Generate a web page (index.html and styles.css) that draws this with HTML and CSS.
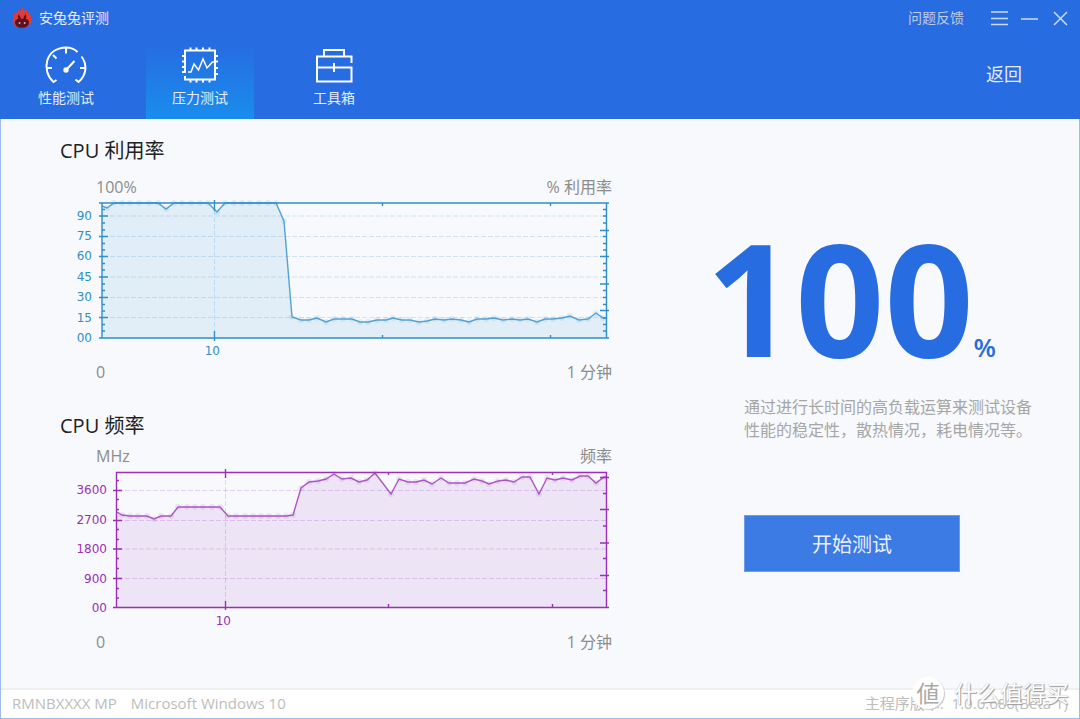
FILE: index.html
```html
<!DOCTYPE html>
<html lang="zh-CN">
<head>
<meta charset="utf-8">
<title>安兔兔评测</title>
<link rel="stylesheet" href="styles.css">
</head>
<body>
<div class="window">
  <header class="header">
    <div class="titlebar">
      <svg class="logo" viewBox="0 0 20 22" aria-hidden="true">
        <path d="M10 21C4 21 .8 17.500 .8 12.500C.8 9 2 6.500 4 5L5 6.500L6.500 2.500L8 4.500L10.500 .5L12.500 4L14.500 2L15.500 6L17 5.500C18.800 8 19.400 10 19.400 12.500C19.400 17.500 16 21 10 21Z" fill="#e23a35"/>
        <path d="M10 20.800C5.500 20.800 3 18.500 3 15.500C3 13.300 4.500 12.200 6.300 12C5.700 10 5.800 8 6.600 7.500C7.800 8 8.500 10 8.800 11.800H11.400C11.700 10 12.400 8 13.600 7.500C14.400 8 14.500 10 13.900 12C15.700 12.300 17 13.300 17 15.500C17 18.500 14.500 20.800 10 20.800Z" fill="#5c1220"/>
        <circle cx="7.500" cy="16" r="1" fill="#f0a0a0"/><circle cx="12.700" cy="16" r="1" fill="#f0a0a0"/>
      </svg>
      <h1 class="app-name">安兔兔评测</h1>
      <a class="feedback" href="#feedback">问题反馈</a>
      <div class="controls">
        <button class="control" aria-label="菜单"><svg viewBox="0 0 18 16"><path d="M0 2H17M0 8.500H17M0 14.500H17"/></svg></button>
        <button class="control" aria-label="最小化"><svg viewBox="0 0 18 16"><path d="M0 9H17"/></svg></button>
        <button class="control" aria-label="关闭"><svg viewBox="0 0 18 16"><path d="M3 2L16 15M16 2L3 15"/></svg></button>
      </div>
    </div>
    <div class="toolbar">
      <nav class="tabs">
        <a class="tab" href="#performance">
          <svg class="tab-icon" viewBox="0 0 44 40"><path stroke-width="2" d="M12.500 35L9.500 37C-3 26 1 3 22 2.500C27 2.500 31 4.500 33.500 7M37.500 11.500C44 20 42 31 34.500 37L31.500 34.500M22 3V8.500M9 10L12.500 13.500M2.500 23H8M36 23H41.500M22 25L30.500 16"/><circle cx="22" cy="25" r="2.700" fill="#fff" stroke="none"/></svg>
          <span>性能测试</span>
        </a>
        <a class="tab tab-active" href="#stress" aria-current="page">
          <svg class="tab-icon" viewBox="0 0 44 40"><path stroke-width="2" d="M7 27V5.500H37V34.500H7V31M12.500 5.500V2.500M18.500 5.500V2.500M25 5.500V2.500M31.500 5.500V2.500M12.500 37.500V34.500M18.500 37.500V34.500M25 37.500V34.500M31.500 37.500V34.500M4 11H7M4 16.500H7M4 22H7M4 27H8M37 11H40M37 16.500H40M37 23H40M37 29H40"/><path stroke-width="1.500" d="M10 27H13L16 19L20.500 25L25 14L29 23L34.500 17H37"/></svg>
          <span>压力测试</span>
        </a>
        <a class="tab" href="#toolbox">
          <svg class="tab-icon" viewBox="0 0 44 40"><path stroke-width="2" d="M12 11V5H32V11M39.500 18V11.500H5V36.500H39.500V22.500H5M22 18V27"/></svg>
          <span>工具箱</span>
        </a>
      </nav>
      <button class="back">返回</button>
    </div>
  </header>

  <main class="main">
    <div class="charts">
      <section class="usage">
        <h2 class="heading">CPU 利用率</h2>
        <div class="labels"><span>100%</span><span>% 利用率</span></div>
        <svg class="chart chart-usage" viewBox="60 199 552 161" role="img" aria-label="CPU 利用率">
          <defs><marker id="dot-usage" markerWidth="8" markerHeight="8" refX="4" refY="4" markerUnits="userSpaceOnUse"><circle class="halo" cx="4" cy="4" r="3"/></marker></defs>
          <path class="area" d="M102 338V206L107 208L114 203H158L166 209L174 203H208L217 212L225 203H276L284 221L292 317L301 320H309L317 318L326 322L334 319H352L360 322H368L377 320H386L393 318L402 320H410L419 322L435 319L444 320L452 319L469 322L477 319H486L494 318L503 320L512 319L520 320L528 319L537 322L545 319H553L570 316L579 320L588 319L596 313L603 318H606V338Z"/>
          <path class="grid" d="M103 216H606M103 236.500H606M103 256.500H606M103 277H606M103 297.500H606M103 317.500H606M214.500 203V338"/>
          <path class="line" marker-mid="url(#dot-usage)" d="M102 206L107 208L114 203H122H130H139H149H158L166 209L174 203H182H191H200H208L217 212L225 203H234H242H250H259H268H276L284 221L292 317L301 320H309L317 318L326 322L334 319H343H352L360 322H368L377 320H386L393 318L402 320H410L419 322L427 321L435 319L444 320L452 319L461 320L469 322L477 319H486L494 318L503 320L512 319L520 320L528 319L537 322L545 319H553L562 318L570 316L579 320L588 319L596 313L603 318H606"/>
          <path class="axis" d="M99 203H609M99 338H609M102 203V338M606.500 203V338M99 216H108M99 236.500H108M99 256.500H108M99 277H108M99 297.500H108M99 317.500H108M214.500 200V211M214.500 331V341M382.500 203V206M550.500 203V206M382.500 335V338M550.500 335V338M600 230.500H609M600 256.500H609M600 284H609M600 310.500H609"/>
          <path class="axis" d="M102 209.500H105M102 223H105M102 230H105M102 243.500H105M102 250H105M102 263.500H105M102 270H105M102 284H105M102 290.500H105M102 304.500H105M102 311H105M102 324.500H105M102 331H105M603 209.500H606M603 216H606M603 223H606M603 236.500H606M603 243.500H606M603 250H606M603 263.500H606M603 270.500H606M603 277H606M603 290.500H606M603 297.500H606M603 304.500H606M603 318H606M603 324.500H606M603 331H606"/>
          <g class="ticks"><text x="92" y="220">90</text><text x="92" y="240">75</text><text x="92" y="260">60</text><text x="92" y="281">45</text><text x="92" y="301">30</text><text x="92" y="322">15</text><text x="92" y="342">00</text><text x="220" y="355">10</text></g>
        </svg>
        <div class="labels"><span>0</span><span>1 分钟</span></div>
      </section>
      <section class="frequency">
        <h2 class="heading">CPU 频率</h2>
        <div class="labels"><span>MHz</span><span>频率</span></div>
        <svg class="chart chart-frequency" viewBox="60 468 552 162" role="img" aria-label="CPU 频率">
          <defs><marker id="dot-frequency" markerWidth="8" markerHeight="8" refX="4" refY="4" markerUnits="userSpaceOnUse"><circle class="halo" cx="4" cy="4" r="3"/></marker></defs>
          <path class="area" d="M116 607V512L122 515L130 516H147L154 519L161 516H171L178 507H220L228 516H286L293 515L301 488L309 482L318 481L326 479L334 474L342 479L351 478L359 482L367 480L375 473L391 494L399 479L408 482H416L424 480L432 484L441 478L449 483H465L474 479L489 484L498 481L506 480L514 482L522 477H530L539 494L547 478L555 480L563 478L572 480L580 476H588L596 483L604 477H606V607Z"/>
          <path class="grid" d="M118 490.500H606M118 520.500H606M118 549H606M118 578.500H606M225.500 473V607"/>
          <path class="line" marker-mid="url(#dot-frequency)" d="M117 512L122 515L130 516H138H147L154 519L161 516H171L178 507H187H195H203H212H220L228 516H236H245H253H261H269H278H286L293 515L301 488L309 482L318 481L326 479L334 474L342 479L351 478L359 482L367 480L375 473L391 494L399 479L408 482H416L424 480L432 484L441 478L449 483H457H465L474 479L482 481L489 484L498 481L506 480L514 482L522 477H530L539 494L547 478L555 480L563 478L572 480L580 476H588L596 483L604 477H606"/>
          <path class="axis" d="M116 472.500H607M113 607.500H609M116.500 472V607M606.500 472V607M113 490.500H122M113 520.500H122M113 549H122M113 578.500H122M225.500 469V478M225.500 601V610M388.500 472V475M552.500 472V475M388.500 604V607M552.500 604V607M600 477.500H609M600 509.500H609M600 543H609M600 575.500H609"/>
          <path class="axis" d="M116 480.500H119M116 499.500H119M116 509.500H119M116 529.500H119M116 539.500H119M116 558.500H119M116 568.500H119M116 588.500H119M116 598H119M603 493.500H606M603 526H606M603 558.500H606M603 590.500H606"/>
          <g class="ticks"><text x="107" y="494">3600</text><text x="107" y="524">2700</text><text x="107" y="553">1800</text><text x="107" y="583">900</text><text x="107" y="612">00</text><text x="231" y="625">10</text></g>
        </svg>
        <div class="labels"><span>0</span><span>1 分钟</span></div>
      </section>
    </div>
    <section class="result">
      <p class="score">100<span class="percent">%</span></p>
      <div class="details">
        <p class="description">通过进行长时间的高负载运算来测试设备性能的稳定性，散热情况，耗电情况等。</p>
        <button class="start">开始测试</button>
      </div>
    </section>
  </main>

  <footer class="footer">
    <div class="system"><span>RMNBXXXX MP</span><span>Microsoft Windows 10</span></div>
    <span>主程序版本:&nbsp; 1.0.0.680(Beta 1)</span>
    <div class="watermark"><span class="badge">値</span><span>什么值得买</span></div>
  </footer>
</div>
</body>
</html>
```
FILE: styles.css
```css
* { box-sizing: border-box; }
body, h1, h2, p { margin: 0; }
body {
  font-family: "Open Sans", "Noto Sans CJK SC", sans-serif;
  font-size: 16px;
  color: #8c8c8c;
  background: #f7f9fd;
}
button {
  padding: 0;
  border: 0;
  background: none;
  color: inherit;
  font-family: inherit;
}
a { color: inherit; text-decoration: none; }
.window {
  display: flex;
  flex-direction: column;
  min-height: 100vh;
  border: 1px solid #9fbbed;
  border-top: 0;
}

.header {
  margin: 0 -1px;
  background: #276ce1;
  color: #e5edfc;
}
.titlebar {
  display: flex;
  align-items: center;
  height: 35px;
  padding: 0 11px 0 12px;
}
.logo { width: 20px; height: 22px; margin-right: 7px; }
.app-name { flex: 1; font-size: 14px; font-weight: 400; line-height: 20px; }
.feedback { margin-right: 27px; font-size: 14px; line-height: 20px; color: #bfcbe3; }
.controls { display: flex; gap: 12px; }
.control { width: 18px; height: 16px; }
.control svg { display: block; fill: none; stroke: #cbdcf8; stroke-width: 1.5; }
.toolbar {
  display: flex;
  justify-content: space-between;
  align-items: stretch;
  height: 84px;
  padding: 0 58px 0 12px;
}
.tabs { display: flex; gap: 26px; }
.tab {
  display: flex;
  flex-direction: column;
  align-items: center;
  width: 108px;
  padding-top: 10px;
  font-size: 14px;
  line-height: 26px;
}
.tab-active { background: linear-gradient(#276ce1 10%, #198ded); }
.tab-icon { width: 44px; height: 40px; fill: none; stroke: #fff; }
.back { align-self: center; font-size: 18px; line-height: 26px; padding-bottom: 6px; }

.main {
  flex: 1;
  display: grid;
  grid-template-columns: 552fr 467fr;
  padding: 18px 0 34px 59px;
}
.heading { font-size: 20px; font-weight: 400; line-height: 28px; color: #222; }
.labels {
  display: flex;
  justify-content: space-between;
  padding-left: 36px;
  line-height: 24px;
}
.usage .heading { margin-bottom: 10px; }
.usage { margin-bottom: 28px; }
.frequency .heading { margin-bottom: 4px; }
.chart { display: block; width: 100%; }
.chart-usage { color: #2f8fc8; }
.chart-frequency { color: #9b2fb8; }
.axis { fill: none; stroke: currentColor; stroke-width: 1.4; }
.line { fill: none; stroke: currentColor; stroke-width: 1.4; opacity: .8; }
.area { fill: currentColor; opacity: .1; }
.grid { fill: none; stroke: currentColor; stroke-dasharray: 5 2; opacity: .2; }
.halo { opacity: .14; }
.chart-usage .halo { fill: #2f8fc8; }
.chart-frequency .halo { fill: #9b2fb8; }
.ticks {
  fill: currentColor;
  font-family: "DejaVu Sans", sans-serif;
  font-size: 12px;
  text-anchor: end;
}

.result { padding: 82px 0 0 94px; }
.score {
  font-size: 156px;
  font-weight: 700;
  line-height: 156px;
  color: #276ce1;
  white-space: nowrap;
}
.percent { font-size: 26px; font-weight: 600; line-height: 26px; }
.details { padding: 21px 36px 0 38px; }
.description { max-width: 290px; line-height: 23px; color: #a6a6a6; }
.start {
  display: block;
  width: 216px;
  height: 57px;
  margin-top: 73px;
  border: 1px solid #6d9ced;
  background: #3c7ae4;
  font-size: 20px;
  color: #e8f0fd;
}

.footer {
  position: relative;
  display: flex;
  justify-content: space-between;
  padding: 1px 11px 2px;
  border-top: 2px solid #eeeff1;
  background: #fff;
  font-size: 15px;
  line-height: 25px;
  color: #bdbdbd;
}
.system { display: flex; gap: 14px; }
.watermark {
  position: absolute;
  right: 10px;
  bottom: 9px;
  display: flex;
  align-items: center;
  gap: 10px;
  font-size: 23px;
  line-height: 32px;
  color: #fff;
  text-shadow: 1px 1px 1px #999, 0 0 1px #aaa;
}
.badge {
  width: 32px;
  height: 32px;
  border-radius: 50%;
  background: #fff;
  box-shadow: 1px 1px 1px #ccc;
  color: #aaa;
  text-align: center;
  text-shadow: none;
}
```
